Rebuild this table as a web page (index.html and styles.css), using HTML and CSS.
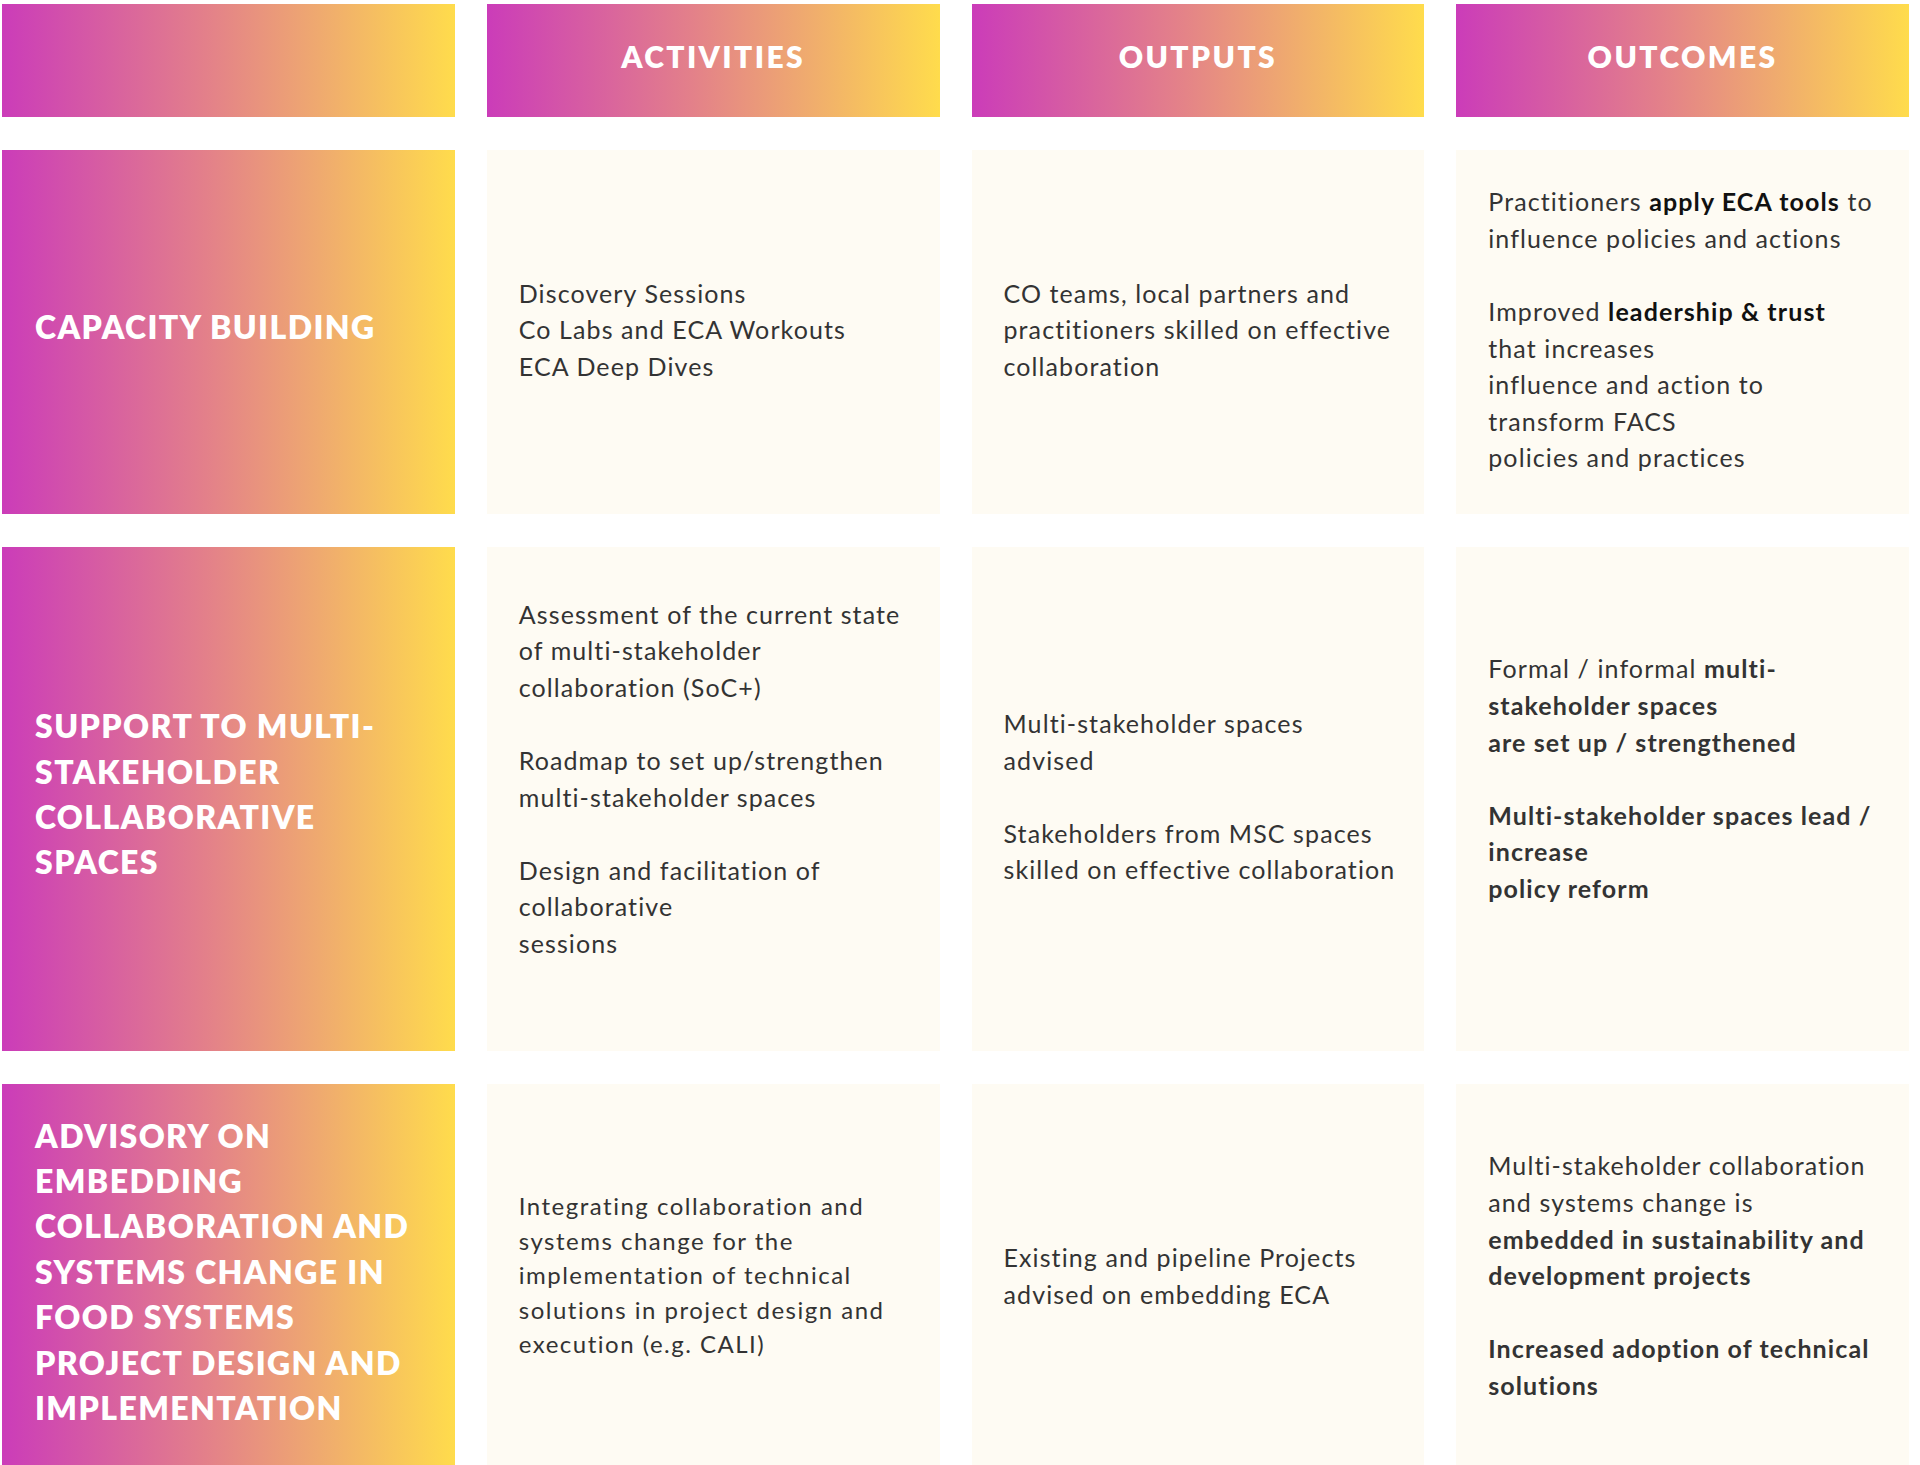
FILE: index.html
```html
<!DOCTYPE html>
<html lang="en">
<head>
<meta charset="utf-8">
<title>ECA Theory of Change</title>
<link rel="stylesheet" href="styles.css">
</head>
<body>
<main class="board">
  <div class="head"></div>
  <div class="head">ACTIVITIES</div>
  <div class="head">OUTPUTS</div>
  <div class="head">OUTCOMES</div>

  <div class="label">CAPACITY BUILDING</div>
  <div class="cell">
    <p>Discovery Sessions<br>Co Labs and ECA Workouts<br>ECA Deep Dives</p>
  </div>
  <div class="cell">
    <p>CO teams, local partners and<br>practitioners skilled on effective<br>collaboration</p>
  </div>
  <div class="cell">
    <p class="dark">Practitioners <strong>apply ECA tools</strong> to<br>influence policies and actions</p>
    <p class="dark">Improved <strong>leadership &amp; trust</strong><br>that increases<br>influence and action to<br>transform FACS<br>policies and practices</p>
  </div>

  <div class="label">SUPPORT TO MULTI-<br>STAKEHOLDER<br>COLLABORATIVE<br>SPACES</div>
  <div class="cell trail">
    <p>Assessment of the current state<br>of multi-stakeholder<br>collaboration (SoC+)</p>
    <p>Roadmap to set up/strengthen<br>multi-stakeholder spaces</p>
    <p>Design and facilitation of<br>collaborative<br>sessions</p>
  </div>
  <div class="cell">
    <p>Multi-stakeholder spaces<br>advised</p>
    <p>Stakeholders from MSC spaces<br>skilled on effective collaboration</p>
  </div>
  <div class="cell trail">
    <p>Formal / informal <strong>multi-<br>stakeholder spaces<br>are set up / strengthened</strong></p>
    <p><strong>Multi-stakeholder spaces lead /<br>increase<br>policy reform</strong></p>
  </div>

  <div class="label last">ADVISORY ON<br>EMBEDDING<br>COLLABORATION AND<br>SYSTEMS CHANGE IN<br>FOOD SYSTEMS<br>PROJECT DESIGN AND<br>IMPLEMENTATION</div>
  <div class="cell low compact">
    <p>Integrating collaboration and<br>systems change for the<br>implementation of technical<br>solutions in project design and<br>execution (e.g. CALI)</p>
  </div>
  <div class="cell low">
    <p>Existing and pipeline Projects<br>advised on embedding ECA</p>
  </div>
  <div class="cell low">
    <p>Multi-stakeholder collaboration<br>and systems change is<br><strong>embedded in sustainability and<br>development projects</strong></p>
    <p><strong>Increased adoption of technical<br>solutions</strong></p>
  </div>
</main>
</body>
</html>
```

FILE: styles.css
```css
html, body {
  margin: 0;
  padding: 0;
  background: #ffffff;
}

body {
  font-family: Lato, "Noto Sans", "Liberation Sans", sans-serif;
  color: #333333;
  overflow: hidden;
}

.board {
  display: grid;
  grid-template-columns: repeat(4, 1fr);
  grid-template-rows: 113px 364px 504px 381px;
  column-gap: 32px;
  row-gap: 33px;
  width: 1907px;
  margin: 4px 0 0 2px;
}

.head,
.label {
  background: linear-gradient(90deg, #cb3cb9 0%, #e3808a 45%, #f0ad6d 72%, #ffdc4c 100%);
  color: #ffffff;
  font-weight: 800;
}

.head {
  display: flex;
  align-items: center;
  justify-content: center;
  padding-bottom: 10px;
  font-size: 30px;
  letter-spacing: 2.4px;
}

.label {
  display: flex;
  flex-direction: column;
  justify-content: center;
  padding: 0 10px 10px 33px;
  font-size: 32px;
  line-height: 45.4px;
  letter-spacing: 1.4px;
  white-space: nowrap;
}

.label.last {
  padding-bottom: 6px;
}

.cell {
  background: #fefbf3;
  display: flex;
  flex-direction: column;
  justify-content: center;
  padding: 0 8px 5px 32px;
  font-size: 25px;
  line-height: 36.6px;
  letter-spacing: 1.1px;
  white-space: nowrap;
}

.cell p {
  margin: 0;
}

.cell p + p {
  margin-top: 36.6px;
}

.cell.trail {
  padding-bottom: 41px;
}

.cell.low {
  padding-top: 8px;
  padding-bottom: 6px;
}

.cell.compact {
  font-size: 24px;
  line-height: 34.4px;
  letter-spacing: 1.5px;
}

.cell strong {
  font-weight: 700;
}

.cell .dark strong {
  color: #111111;
}
```
